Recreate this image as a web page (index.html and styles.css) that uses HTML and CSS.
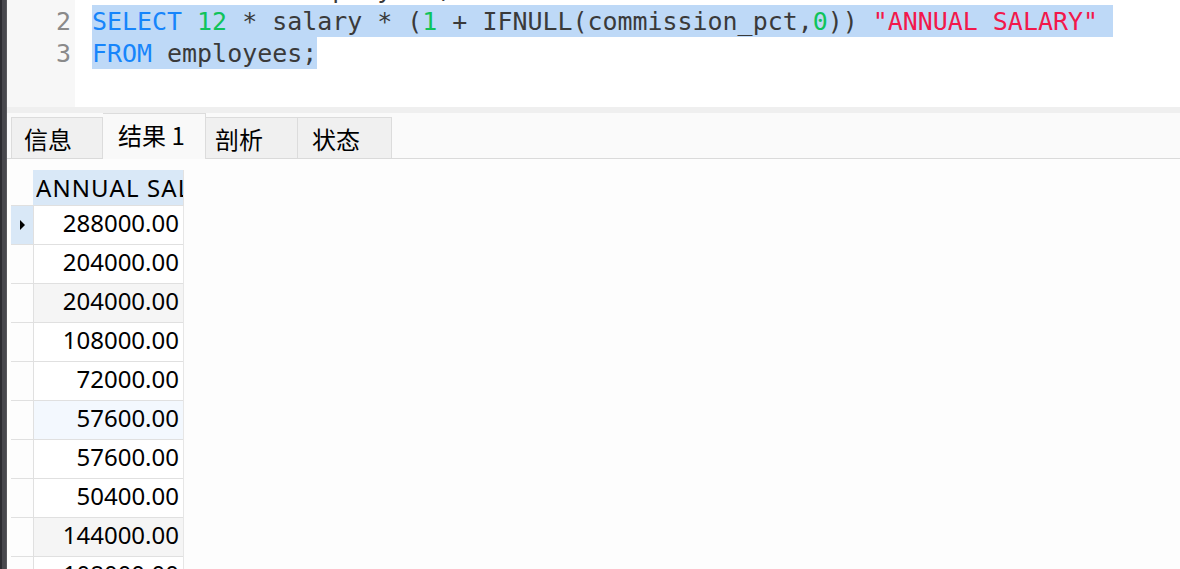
FILE: index.html
```html
<!DOCTYPE html>
<html lang="zh-CN">
<head>
<meta charset="utf-8">
<title>Navicat Query</title>
<link rel="stylesheet" href="styles.css">
</head>
<body>
<div class="app">
  <div class="side-rail"></div>
  <div class="main">
    <div class="editor">
      <div class="gutter">
        <div class="ln">1</div>
        <div class="ln">2</div>
        <div class="ln">3</div>
      </div>
      <div class="code">
        <div class="line">SELECT * FROM employees;</div>
        <div class="line"><span class="sel"><span class="kw">SELECT</span> <span class="num">12</span> * salary * (<span class="num">1</span> + IFNULL(commission_pct,<span class="num">0</span>)) <span class="str">"ANNUAL SALARY"</span> </span></div>
        <div class="line"><span class="sel"><span class="kw">FROM</span> employees;</span></div>
      </div>
    </div>
    <div class="splitter"></div>
    <div class="tabbar">
      <div class="tab tab-info">信息</div>
      <div class="tab tab-active">结果 1</div>
      <div class="tab tab-profile">剖析</div>
      <div class="tab tab-status">状态</div>
    </div>
    <div class="results">
      <table class="grid">
        <thead>
          <tr><th class="ind"></th><th class="col"><span class="clip">ANNUAL SALARY</span></th></tr>
        </thead>
        <tbody>
          <tr class="current"><td class="ind"><span class="arrow"></span></td><td class="col">288000.00</td></tr>
          <tr><td class="ind"></td><td class="col">204000.00</td></tr>
          <tr class="alt"><td class="ind"></td><td class="col">204000.00</td></tr>
          <tr><td class="ind"></td><td class="col">108000.00</td></tr>
          <tr><td class="ind"></td><td class="col">72000.00</td></tr>
          <tr class="hover"><td class="ind"></td><td class="col">57600.00</td></tr>
          <tr><td class="ind"></td><td class="col">57600.00</td></tr>
          <tr><td class="ind"></td><td class="col">50400.00</td></tr>
          <tr class="alt"><td class="ind"></td><td class="col">144000.00</td></tr>
          <tr><td class="ind"></td><td class="col">108000.00</td></tr>
        </tbody>
      </table>
    </div>
  </div>
</div>
</body>
</html>
```

FILE: styles.css
```css
html, body {
  margin: 0;
  padding: 0;
  width: 1180px;
  height: 569px;
  overflow: hidden;
  background: #fdfdfd;
}

.app {
  display: flex;
  width: 1180px;
  height: 569px;
}

.side-rail {
  width: 7px;
  flex: none;
  background: linear-gradient(to right, #2c2c31 0, #2c2c31 2px, #48484d 2px, #48484d 6px, #5a5a5e 6px);
}

.main {
  flex: 1;
  display: flex;
  flex-direction: column;
  min-width: 0;
}

/* ---------- editor ---------- */
.editor {
  height: 107px;
  flex: none;
  display: flex;
  overflow: hidden;
  background: #ffffff;
  font-family: "DejaVu Sans Mono", monospace;
  font-size: 24.95px;
}

.gutter {
  width: 68px;
  flex: none;
  background: #f7f7f7;
  padding-right: 4px;
  box-sizing: border-box;
  text-align: right;
  color: #8a8a8a;
}

.gutter .ln:first-child,
.code .line:first-child {
  margin-top: -27px;
}

.ln {
  height: 32px;
  line-height: 34px;
}

.code {
  flex: 1;
  padding-left: 17px;
  color: #3a3a3a;
}

.line {
  height: 32px;
  line-height: 34px;
  white-space: pre;
}

.sel {
  display: inline-block;
  height: 32px;
  vertical-align: top;
  background: #bed9f7;
}

.kw { color: #1785fb; }
.num { color: #10c35b; }
.str { color: #f2184b; }

/* ---------- splitter + tabs ---------- */
.splitter {
  height: 6px;
  flex: none;
  background: #efefef;
}

.tabbar {
  height: 45px;
  flex: none;
  display: flex;
  align-items: flex-end;
  padding-left: 4px;
  background: #fafafa;
  border-bottom: 1px solid #dadada;
  font-family: "Noto Sans CJK SC", "Microsoft YaHei", sans-serif;
  font-size: 24px;
  color: #000;
}

.tab {
  height: 41px;
  box-sizing: border-box;
  background: #f0f0f0;
  border: 1px solid #dcdcdc;
  border-bottom: none;
  border-left: none;
  line-height: 42px;
  white-space: nowrap;
}

.tab-info {
  width: 92px;
  padding-left: 12px;
  border-left: 1px solid #dcdcdc;
}

.tab-active {
  width: 103px;
  height: 46px;
  margin-bottom: -1px;
  padding-left: 15px;
  background: #f9f9f9;
  line-height: 42px;
}

.tab-profile {
  width: 92px;
  padding-left: 9px;
}

.tab-status {
  width: 94px;
  padding-left: 14px;
}

/* ---------- result grid ---------- */
.results {
  flex: 1;
  padding: 11px 0 0 4px;
  background: #fdfdfd;
  overflow: hidden;
}

.grid {
  border-collapse: collapse;
  table-layout: fixed;
  font-family: "Noto Sans", "Open Sans", sans-serif;
  font-size: 24px;
  color: #000;
}

.grid th, .grid td {
  padding: 0;
  box-sizing: border-box;
}

.grid th {
  height: 35px;
  font-weight: normal;
  text-align: left;
}

.grid th.ind {
  width: 22px;
  background: transparent;
}

.grid th.col {
  width: 150px;
  background: #d9e8f7;
  border-right: 1px solid #e2e2e2;
  padding-left: 3px;
  overflow: hidden;
}

.clip {
  display: block;
  width: 147px;
  overflow: hidden;
  white-space: nowrap;
  line-height: 33px;
  letter-spacing: 1.1px;
}

.grid td {
  height: 39px;
  border-top: 1px solid #e0e0e0;
  line-height: 34px;
  vertical-align: top;
}

.grid td.ind {
  width: 22px;
  border-right: 1px solid #e0e0e0;
  text-align: center;
  vertical-align: middle;
}

.grid td.col {
  width: 150px;
  text-align: right;
  padding-right: 4px;
  border-right: 1px solid #e6e6e6;
  background: #ffffff;
}

.grid tr.current td.ind {
  background: #d9e8f7;
}

.grid tr.alt td.col {
  background: #f5f5f5;
}

.grid tr.hover td.col {
  background: #f3f8fe;
}

.arrow {
  display: block;
  width: 0;
  height: 0;
  margin: 0 auto 0 9px;
  border-top: 5px solid transparent;
  border-bottom: 5px solid transparent;
  border-left: 5px solid #000;
}
```
